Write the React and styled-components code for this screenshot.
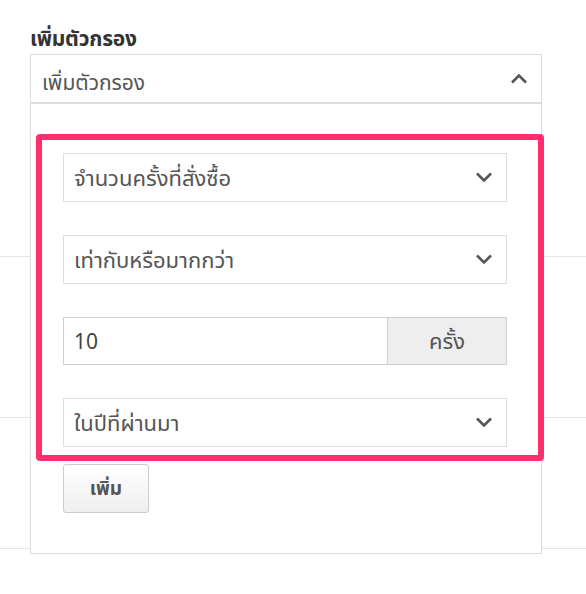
import React from 'react'
import styled, { createGlobalStyle } from 'styled-components';

const GlobalStyle = createGlobalStyle`
  body {
    margin: 0;
    padding: 0;
    background: #fff;
    font-family: 'Noto Sans Thai', 'Noto Sans', 'DejaVu Sans', sans-serif;
  }
`;

const Page = styled.div`
  position: relative;
  width: 586px;
  height: 594px;
  overflow: hidden;
`;

const Row = styled.div`
  height: ${p => p.h}px;
  border-bottom: 1px solid #e6e6e6;
  box-sizing: border-box;
`;

const Widget = styled.div`
  position: absolute;
  left: 30px;
  top: 26px;
  width: 512px;
`;

const Title = styled.div`
  font-size: 21px;
  font-weight: 700;
  color: #333;
  line-height: 28px;
  height: 28px;
  letter-spacing: -0.2px;
`;

const Dropdown = styled.div`
  background: #fff;
  border: 1px solid #dcdcdc;
  box-sizing: border-box;
`;

const Trigger = styled.div`
  display: flex;
  align-items: center;
  justify-content: space-between;
  height: 49px;
  box-sizing: border-box;
  padding: 0 13px 0 11px;
  border-bottom: 2px solid #dcdcdc;
  font-size: 21px;
  color: #555;

  span {
    padding-top: 9px;
  }
`;

const Body = styled.div`
  padding: 49px 34px 40px 32px;
`;

const Form = styled.div`
  position: relative;
  display: flex;
  flex-direction: column;
  gap: 33px;
`;

const Highlight = styled.div`
  position: absolute;
  left: -27px;
  right: -37px;
  top: -19px;
  bottom: -14px;
  border: 6px solid #ff2f6e;
  border-radius: 4px;
  pointer-events: none;
`;

const Select = styled.div`
  display: flex;
  align-items: center;
  justify-content: space-between;
  height: 49px;
  box-sizing: border-box;
  padding: 0 13px 0 10px;
  border: 1px solid #dedede;
  font-size: 22px;
  color: #555;

  span {
    padding-top: 4px;
  }
`;

const InputGroup = styled.div`
  display: flex;
  height: 48px;
`;

const Input = styled.div`
  flex: 1;
  display: flex;
  align-items: center;
  padding: 2px 10px 0;
  border: 1px solid #cfcfcf;
  border-right: none;
  font-size: 21px;
  color: #444;
`;

const Addon = styled.div`
  width: 120px;
  display: flex;
  align-items: center;
  justify-content: center;
  padding-top: 3px;
  background: #eee;
  border: 1px solid #cfcfcf;
  box-sizing: border-box;
  font-size: 22px;
  color: #555;
`;

const Button = styled.button`
  margin-top: 17px;
  width: 86px;
  height: 49px;
  padding-top: 3px;
  border: 1px solid #cdcdcd;
  border-radius: 3px;
  background: linear-gradient(#fff, #efefef);
  font-family: inherit;
  font-size: 19px;
  font-weight: 700;
  color: #555;
`;

const Chevron = ({ up }) => (
  <svg width="18" height="11" viewBox="0 0 18 11">
    <path
      d={up ? 'M2 9.5 L9 2.5 L16 9.5' : 'M2 1.5 L9 8.5 L16 1.5'}
      fill="none"
      stroke="#555"
      strokeWidth="2.6"
    />
  </svg>
);

const selects = ['จำนวนครั้งที่สั่งซื้อ', 'เท่ากับหรือมากกว่า'];

const App = () => {
  return (
    <Page>
      <GlobalStyle />
      <Row h={257} />
      <Row h={161} />
      <Row h={131} />
      <Widget>
        <Title>เพิ่มตัวกรอง</Title>
        <Dropdown>
          <Trigger>
            <span>เพิ่มตัวกรอง</span>
            <Chevron up />
          </Trigger>
          <Body>
            <Form>
              {selects.map(s => (
                <Select key={s}>
                  <span>{s}</span>
                  <Chevron />
                </Select>
              ))}
              <InputGroup>
                <Input>10</Input>
                <Addon>ครั้ง</Addon>
              </InputGroup>
              <Select>
                <span>ในปีที่ผ่านมา</span>
                <Chevron />
              </Select>
              <Highlight />
            </Form>
            <Button>เพิ่ม</Button>
          </Body>
        </Dropdown>
      </Widget>
    </Page>
  )
}
export default App;
